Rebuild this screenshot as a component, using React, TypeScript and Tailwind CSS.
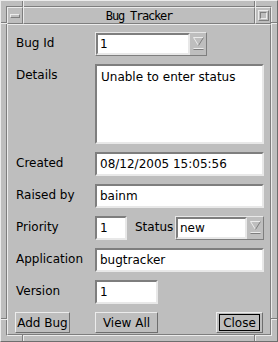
import React from "react";

const font = { fontFamily: '"DejaVu Sans", "Liberation Sans", sans-serif' };

function Arrow() {
  return (
    <svg width="12" height="14" viewBox="0 0 12 14" className="block">
      <polygon points="0.5,0.5 10.5,0.5 5.5,8.5" fill="#bebebe" />
      <line x1="0.5" y1="0.5" x2="10.5" y2="0.5" stroke="#ececec" strokeWidth="1" />
      <line x1="0.5" y1="0.5" x2="5.5" y2="8.5" stroke="#ececec" strokeWidth="1" />
      <line x1="10.5" y1="0.5" x2="5.5" y2="8.5" stroke="#7e7e7e" strokeWidth="1" />
      <rect x="0.5" y="11" width="10" height="1" fill="#ececec" />
      <rect x="0.5" y="12" width="10" height="1" fill="#7e7e7e" />
    </svg>
  );
}

function Field({ value, w, h = 24 }: { value: string; w?: string; h?: number }) {
  return (
    <div
      className={`box-border bg-white border-2 border-t-[#7e7e7e] border-l-[#7e7e7e] border-b-[#e8e8e8] border-r-[#e8e8e8] pl-[3px] text-[12px] leading-[14px] text-black flex items-center whitespace-nowrap overflow-hidden ${w ?? "flex-1"}`}
      style={{ height: h }}
    >
      {value}
    </div>
  );
}

function Combo({ value, w, textW }: { value: string; w: string; textW: string }) {
  return (
    <div
      className={`box-border h-[24px] ${w} flex border border-t-[#e8e8e8] border-l-[#e8e8e8] border-b-[#7e7e7e] border-r-[#7e7e7e] bg-[#bebebe]`}
    >
      <div
        className={`box-border h-full ${textW} bg-white border-2 border-t-[#7e7e7e] border-l-[#7e7e7e] border-b-[#e8e8e8] border-r-[#e8e8e8] pl-[2px] text-[12px] leading-[14px] text-black flex items-center`}
      >
        {value}
      </div>
      <div className="flex-1 flex items-start justify-center pt-[4px] pl-[1px]">
        <Arrow />
      </div>
    </div>
  );
}

function Label({ children }: { children: React.ReactNode }) {
  return <div className="text-[12px] leading-[14px] text-black pt-[4px] whitespace-nowrap">{children}</div>;
}

function Groove({ className }: { className: string }) {
  return <div className={`absolute ${className}`} />;
}

export default function App() {
  return (
    <div
      className="relative box-border w-[278px] h-[342px] bg-[#bebebe] border border-t-[#ececec] border-l-[#ececec] border-b-[#6e6e6e] border-r-[#6e6e6e] p-[5px]"
      style={font}
    >
      {/* corner grooves */}
      <Groove className="left-[21px] top-0 w-[2px] h-[6px] border-l border-l-[#7e7e7e] border-r border-r-[#ececec]" />
      <Groove className="left-[253px] top-0 w-[2px] h-[6px] border-l border-l-[#7e7e7e] border-r border-r-[#ececec]" />
      <Groove className="left-[21px] bottom-0 w-[2px] h-[6px] border-l border-l-[#7e7e7e] border-r border-r-[#ececec]" />
      <Groove className="left-[253px] bottom-0 w-[2px] h-[6px] border-l border-l-[#7e7e7e] border-r border-r-[#ececec]" />
      <Groove className="left-0 top-[21px] w-[6px] h-[2px] border-t border-t-[#7e7e7e] border-b border-b-[#ececec]" />
      <Groove className="right-0 top-[21px] w-[6px] h-[2px] border-t border-t-[#7e7e7e] border-b border-b-[#ececec]" />
      <Groove className="left-0 top-[317px] w-[6px] h-[2px] border-t border-t-[#7e7e7e] border-b border-b-[#ececec]" />
      <Groove className="right-0 top-[317px] w-[6px] h-[2px] border-t border-t-[#7e7e7e] border-b border-b-[#ececec]" />

      <div className="box-border h-full flex flex-col border border-t-[#7e7e7e] border-l-[#7e7e7e] border-b-[#ececec] border-r-[#ececec]">
        {/* title bar */}
        <div className="h-[17px] flex shrink-0">
          <div className="box-border w-[16px] h-full border border-t-[#ececec] border-l-[#ececec] border-b-[#7e7e7e] border-r-[#7e7e7e] flex items-center justify-center">
            <div className="box-border w-[10px] h-[4px] border border-t-[#ececec] border-l-[#ececec] border-b-[#7e7e7e] border-r-[#7e7e7e]" />
          </div>
          <div
            className="box-border flex-1 h-full border border-t-[#ececec] border-l-[#ececec] border-b-[#7e7e7e] border-r-[#7e7e7e] flex items-center justify-center text-[12px] leading-[14px] tracking-[-1.2px] text-black"
            style={{ fontFamily: '"DejaVu Sans Mono", "Liberation Mono", monospace' }}
          >
            Bug Tracker
          </div>
          <div className="box-border w-[16px] h-full border border-t-[#ececec] border-l-[#ececec] border-b-[#7e7e7e] border-r-[#7e7e7e] flex items-center justify-center">
            <div className="box-border w-[11px] h-[11px] border border-t-[#ececec] border-l-[#ececec] border-b-[#7e7e7e] border-r-[#7e7e7e] flex items-center justify-center">
              <div className="box-border w-[7px] h-[7px] border border-t-[#7e7e7e] border-l-[#7e7e7e] border-b-[#ececec] border-r-[#ececec]" />
            </div>
          </div>
        </div>

        {/* client area */}
        <div className="box-border flex-1 border border-t-[#ececec] border-l-[#ececec] border-b-[#7e7e7e] border-r-[#7e7e7e] pl-[8px] pr-[6px] pt-[7px] flex flex-col gap-[8px]">
          <div className="grid grid-cols-[79px_1fr] gap-y-[8px]">
            <Label>Bug Id</Label>
            <Combo value="1" w="w-[112px]" textW="w-[94px]" />

            <Label>Details</Label>
            <div className="box-border h-[80px] bg-white border-2 border-t-[#7e7e7e] border-l-[#7e7e7e] border-b-[#e8e8e8] border-r-[#e8e8e8] pl-[4px] pt-[4px] text-[12px] leading-[14px] text-black">
              Unable to enter status
            </div>

            <Label>Created</Label>
            <Field value="08/12/2005 15:05:56" />

            <Label>Raised by</Label>
            <Field value="bainm" />

            <Label>Priority</Label>
            <div className="flex">
              <Field value="1" w="w-[32px]" />
              <div className="ml-[8px] mr-[2px] w-[38px]">
                <Label>Status</Label>
              </div>
              <Combo value="new" w="flex-1" textW="w-[71px]" />
            </div>

            <Label>Application</Label>
            <Field value="bugtracker" />

            <Label>Version</Label>
            <Field value="1" w="w-[63px]" />
          </div>

          <div className="flex items-start h-[21px] text-[12px] leading-[14px] text-black">
            <div className="ml-[-1px] box-border w-[55px] h-[21px] border border-t-[#ececec] border-l-[#ececec] border-b-[#6e6e6e] border-r-[#6e6e6e] flex items-center justify-center whitespace-nowrap">
              Add Bug
            </div>
            <div className="ml-[25px] box-border w-[63px] h-[21px] border border-t-[#ececec] border-l-[#ececec] border-b-[#6e6e6e] border-r-[#6e6e6e] flex items-center justify-center whitespace-nowrap">
              View All
            </div>
            <div className="ml-auto mr-[1px] box-border w-[47px] h-[21px] border border-t-[#ececec] border-l-[#ececec] border-b-[#6e6e6e] border-r-[#6e6e6e] p-[1px] flex">
              <div className="box-border flex-1 mx-[1px] border border-black flex items-center justify-center whitespace-nowrap">
                Close
              </div>
            </div>
          </div>
        </div>
      </div>
    </div>
  );
}
